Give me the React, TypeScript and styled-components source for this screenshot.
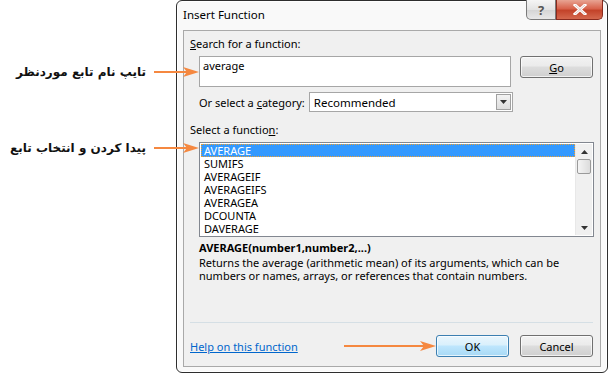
import React from "react";
import styled, { createGlobalStyle } from "styled-components";

const Global = createGlobalStyle`
  html, body { margin: 0; padding: 0; background: #ffffff; }
  body { width: 609px; height: 375px; overflow: hidden; font-family: "Noto Sans", "Open Sans", sans-serif; }
`;

const UI = `"Noto Sans", "Open Sans", "DejaVu Sans", sans-serif`;

const Page = styled.div`
  display: flex;
  width: 609px;
  height: 375px;
`;

const Annotations = styled.div`
  width: 176px;
  flex: none;
  display: flex;
  flex-direction: column;
  position: relative;
  z-index: 2;
`;

const Note = styled.div<{ $top: number }>`
  display: flex;
  align-items: center;
  justify-content: flex-end;
  height: 16px;
  margin-top: ${(p) => p.$top}px;
  margin-right: -23px;
`;

const NoteText = styled.span`
  font-family: "DejaVu Sans", sans-serif;
  font-weight: bold;
  font-size: 12px;
  color: #111;
  direction: rtl;
  margin-right: 8px;
`;

const Arrow = ({ w }: { w: number }) => (
  <svg width={w} height="12" viewBox={`0 0 ${w} 12`} style={{ display: "block", flex: "none" }}>
    <line x1="0" y1="6" x2={w - 10} y2="6" stroke="#f58840" strokeWidth="2" />
    <path d={`M${w - 16} 1 L${w} 6 L${w - 16} 11 L${w - 12} 6 Z`} fill="#f58840" />
  </svg>
);

const Dialog = styled.div`
  width: 430px;
  height: 371px;
  border: 1px solid #2e2e2e;
  border-radius: 6px;
  background: #f9f9f9;
  box-shadow: inset 0 0 0 1px #ffffff;
  display: flex;
  flex-direction: column;
  font-family: ${UI};
  font-size: 11px;
  color: #000;
`;

const TitleBar = styled.div`
  height: 29px;
  display: flex;
  align-items: flex-start;
  justify-content: space-between;
`;

const Title = styled.div`
  font-size: 11.5px;
  padding: 6px 0 0 6px;
  color: #000;
`;

const Caption = styled.div`
  display: flex;
  margin-right: 4px;
  margin-top: -1px;
`;

const CapBtn = styled.div<{ $close?: boolean }>`
  height: 20px;
  width: ${(p) => (p.$close ? 47 : 30)}px;
  border: 1px solid ${(p) => (p.$close ? "#8a2a1d" : "#7a7a7a")};
  border-top: none;
  border-radius: ${(p) => (p.$close ? "0 0 5px 0" : "0 0 0 5px")};
  background: ${(p) =>
    p.$close
      ? "linear-gradient(#e8a493 0%, #d8634c 45%, #c3432a 55%, #d4684e 100%)"
      : "linear-gradient(#f5f5f5 0%, #e3e3e3 50%, #d4d4d4 51%, #e8e8e8 100%)"};
  display: flex;
  align-items: center;
  justify-content: center;
  box-sizing: border-box;
  color: ${(p) => (p.$close ? "#fff" : "#555")};
  font-size: 13px;
  font-weight: bold;
`;

const Panel = styled.div`
  flex: 1;
  margin: 0 6px 5px 6px;
  border: 1px solid #a9a9a9;
  background: #f0f0f0;
  display: flex;
  flex-direction: column;
  padding: 0 7px 0 6px;
`;

const Label = styled.div<{ $top: number }>`
  margin-top: ${(p) => p.$top}px;
  line-height: 15px;
  white-space: nowrap;
`;

const U = styled.span`
  text-decoration: underline;
`;

const SearchRow = styled.div`
  display: flex;
  align-items: flex-start;
  margin-top: 5px;
  margin-left: 9px;
`;

const SearchBox = styled.div`
  width: 312px;
  height: 31px;
  box-sizing: border-box;
  border: 1px solid #a6a6a6;
  background: #fff;
  padding: 1px 3px 0;
  line-height: 16px;
`;

const Button = styled.div<{ $primary?: boolean }>`
  width: 73px;
  height: 22px;
  box-sizing: border-box;
  border: 1px solid ${(p) => (p.$primary ? "#3c7fb1" : "#707070")};
  border-radius: 3px;
  background: ${(p) =>
    p.$primary
      ? "linear-gradient(#eaf6fd 0%, #d9f0fc 45%, #bee6fd 50%, #a7d9f5 100%)"
      : "linear-gradient(#f2f2f2 0%, #ebebeb 45%, #dddddd 50%, #cfcfcf 100%)"};
  box-shadow: inset 0 0 0 1px rgba(255,255,255,0.7);
  display: flex;
  align-items: center;
  justify-content: center;
  flex: none;
`;

const GoButton = styled(Button)`
  margin-left: 9px;
`;

const CategoryRow = styled.div`
  display: flex;
  align-items: center;
  margin-top: 5px;
  margin-left: 9px;
  gap: 4px;
`;

const Select = styled.div`
  width: 204px;
  height: 20px;
  box-sizing: border-box;
  border: 1px solid #a6a6a6;
  background: #fff;
  display: flex;
  align-items: center;
  justify-content: space-between;
  padding-left: 4px;
  font-size: 11.5px;
`;

const DropBtn = styled.div`
  width: 15px;
  height: 16px;
  margin-right: 1px;
  border: 1px solid #a0a0a0;
  box-sizing: border-box;
  background: linear-gradient(#f3f3f3, #dedede);
  display: flex;
  align-items: center;
  justify-content: center;
`;

const List = styled.div`
  margin-top: 5px;
  margin-left: 9px;
  width: 395px;
  height: 95px;
  box-sizing: border-box;
  border: 1px solid #828790;
  background: #fff;
  display: flex;
  padding: 1px;
`;

const Items = styled.div`
  flex: 1;
  display: flex;
  flex-direction: column;
`;

const Item = styled.div<{ $sel?: boolean }>`
  height: 13px;
  line-height: 13px;
  padding-left: 3px;
  box-sizing: border-box;
  background: ${(p) => (p.$sel ? "#3399ff" : "transparent")};
  color: ${(p) => (p.$sel ? "#fff" : "#000")};
  outline: ${(p) => (p.$sel ? "1px dotted #f0a030" : "none")};
  outline-offset: -1px;
`;

const Scroll = styled.div`
  width: 16px;
  background: #f0f0f0;
  border-left: 1px solid #e8e8e8;
  display: flex;
  flex-direction: column;
  align-items: center;
`;

const ScrollArrow = styled.div`
  height: 15px;
  display: flex;
  align-items: center;
  justify-content: center;
`;

const Thumb = styled.div`
  width: 14px;
  height: 15px;
  box-sizing: border-box;
  border: 1px solid #9a9a9a;
  border-radius: 2px;
  background: linear-gradient(90deg, #f4f4f4, #dcdcdc);
`;

const Spacer = styled.div`
  flex: 1;
`;

const Signature = styled.div`
  margin-top: 3px;
  margin-left: 9px;
  font-weight: bold;
  line-height: 16px;
`;

const Desc = styled.div`
  margin-left: 9px;
  line-height: 13px;
  margin-top: 0;
`;

const Separator = styled.div`
  height: 1px;
  background: #d5dfe5;
  margin-top: auto;
`;

const Footer = styled.div`
  display: flex;
  align-items: center;
  height: 40px;
  padding-top: 3px;
`;

const Link = styled.span`
  color: #0066cc;
  text-decoration: underline;
`;

const ButtonRow = styled.div`
  margin-left: auto;
  display: flex;
  align-items: center;
  gap: 11px;
`;

const ArrowSlot = styled.div`
  margin-right: -11px;
  display: flex;
  align-items: center;
`;

const Tri = ({ up }: { up?: boolean }) => (
  <svg width="7" height="4" viewBox="0 0 7 4">
    <path d={up ? "M0 4 L3.5 0 L7 4 Z" : "M0 0 L7 0 L3.5 4 Z"} fill="#333" />
  </svg>
);

const functions = ["AVERAGE", "SUMIFS", "AVERAGEIF", "AVERAGEIFS", "AVERAGEA", "DCOUNTA", "DAVERAGE"];

export default function App() {
  return (
    <>
      <Global />
      <Page>
        <Annotations>
          <Note $top={64}>
            <NoteText>تایپ نام تابع موردنظر</NoteText>
            <Arrow w={45} />
          </Note>
          <Note $top={60}>
            <NoteText>پیدا کردن و انتخاب تابع</NoteText>
            <Arrow w={45} />
          </Note>
        </Annotations>
        <Dialog>
          <TitleBar>
            <Title>Insert Function</Title>
            <Caption>
              <CapBtn>?</CapBtn>
              <CapBtn $close>
                <svg width="14" height="11" viewBox="0 0 14 11">
                  <path d="M2 1 L12 10 M12 1 L2 10" stroke="#fff" strokeWidth="3" strokeLinecap="square" />
                  <path d="M2 1 L12 10 M12 1 L2 10" stroke="#6b1b10" strokeWidth="0.6" opacity="0.4" />
                </svg>
              </CapBtn>
            </Caption>
          </TitleBar>
          <Panel>
            <Label $top={5}>
              <U>S</U>earch for a function:
            </Label>
            <SearchRow>
              <SearchBox>average</SearchBox>
              <GoButton>
                <U>G</U>o
              </GoButton>
            </SearchRow>
            <CategoryRow>
              <span>
                Or select a <U>c</U>ategory:
              </span>
              <Select>
                <span>Recommended</span>
                <DropBtn>
                  <Tri />
                </DropBtn>
              </Select>
            </CategoryRow>
            <Label $top={10}>
              Select a functio<U>n</U>:
            </Label>
            <List>
              <Items>
                {functions.map((f, i) => (
                  <Item key={f} $sel={i === 0}>
                    {f}
                  </Item>
                ))}
              </Items>
              <Scroll>
                <ScrollArrow>
                  <Tri up />
                </ScrollArrow>
                <Thumb />
                <Spacer />
                <ScrollArrow>
                  <Tri />
                </ScrollArrow>
              </Scroll>
            </List>
            <Signature>AVERAGE(number1,number2,...)</Signature>
            <Desc>
              Returns the average (arithmetic mean) of its arguments, which can be
              <br />
              numbers or names, arrays, or references that contain numbers.
            </Desc>
            <Separator />
            <Footer>
              <Link>Help on this function</Link>
              <ButtonRow>
                <ArrowSlot>
                  <Arrow w={92} />
                </ArrowSlot>
                <Button $primary>OK</Button>
                <Button>Cancel</Button>
              </ButtonRow>
            </Footer>
          </Panel>
        </Dialog>
      </Page>
    </>
  );
}
